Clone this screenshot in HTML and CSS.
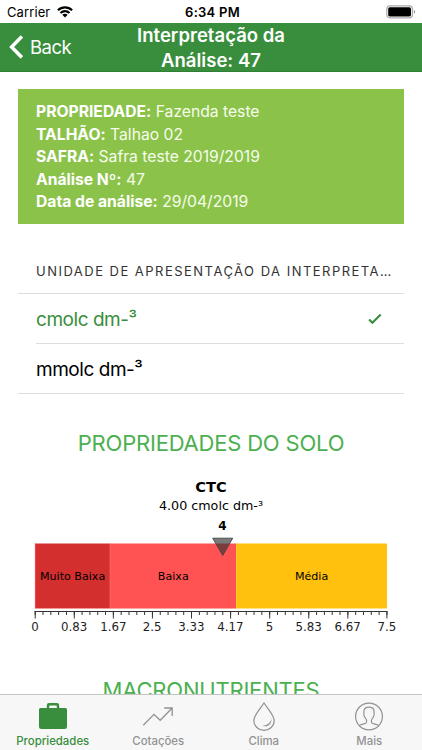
FILE: index.html
```
<!DOCTYPE html>
<html lang="pt-BR">
<head>
<meta charset="utf-8">
<meta name="viewport" content="width=device-width">
<title>Interpretação da Análise</title>
<link rel="stylesheet" href="styles.css">
</head>
<body>
<div class="app">
  <div class="status">
    <div class="carrier"><span>Carrier</span>
      <svg width="16" height="12" viewBox="0 0 16 12"><g fill="none" stroke="#000" stroke-width="2.1"><path d="M.9 4.3C4.9.4 11.1.4 15.1 4.3"/><path d="M3.5 6.9c2.5-2.4 6.5-2.4 9 0"/></g><path d="M5.3 8.8c1.6-1.4 3.8-1.4 5.4 0L8 11.5z"/></svg>
    </div>
    <div class="time">6:34 PM</div>
    <svg class="battery" width="30" height="14" viewBox="0 0 30 14"><rect x=".8" y=".8" width="25.6" height="12" rx="3" fill="#fff" stroke="#aaa" stroke-width="1.2"/><rect x="2.2" y="2.2" width="22.8" height="9.2" rx="1.6"/><path d="M27.8 4.8c1.8.6 1.8 3.4 0 4z" fill="#999"/></svg>
  </div>
  <header class="header">
    <div class="back"><svg width="14" height="24" viewBox="0 0 14 24"><path d="M12.9 1.4 2.6 11.9l10.3 10.5" fill="none" stroke="#fff" stroke-width="3.5"/></svg><span>Back</span></div>
    <h1 class="title">Interpretação da<br>Análise: 47</h1>
  </header>
  <main class="content">
    <section class="card">
      <div class="info"><b>PROPRIEDADE:</b> Fazenda teste</div>
      <div class="info"><b>TALHÃO:</b> Talhao 02</div>
      <div class="info"><b>SAFRA:</b> Safra teste 2019/2019</div>
      <div class="info"><b>Análise Nº:</b> 47</div>
      <div class="info"><b>Data de análise:</b> 29/04/2019</div>
    </section>
    <section class="units">
      <div class="units-head"><span>UNIDADE DE APRESENTAÇÃO DA INTERPRETA…</span></div>
      <div class="unit selected"><span>cmolc dm-³</span><svg width="14" height="12" viewBox="0 0 14 12"><path d="M1.1 6.6 4.4 9.7 12.7 1.6" fill="none" stroke="#388e3c" stroke-width="2.1"/></svg></div>
      <div class="unit"><span>mmolc dm-³</span></div>
    </section>
    <h2 class="section-title">PROPRIEDADES DO SOLO</h2>
    <svg class="chart" width="422" height="165" viewBox="0 475 422 165">
      <g text-anchor="middle">
        <text class="name" x="211" y="492.2">CTC</text>
        <text class="value" x="211" y="510.2">4.00 cmolc dm-³</text>
        <text class="pointer" x="222.5" y="529.5">4</text>
      </g>
      <rect x="35" y="543.5" width="75" height="65" fill="#d32f2f"/>
      <rect x="110" y="543.5" width="126.2" height="65" fill="#ff5252"/>
      <rect x="236.2" y="543.5" width="150.8" height="65" fill="#ffc10d"/>
      <path d="M110 543.5v65M35.2 543.5v65" stroke="#ff7770" stroke-width=".6"/>
      <path d="M35 608.5H236" stroke="#ff9c94" stroke-width=".6"/>
      <path d="M212.7 538.2h20L222.7 555.5z" fill="#333" fill-opacity=".65" stroke="#444" stroke-width=".9"/>
      <g class="bands" text-anchor="middle">
        <text x="72.6" y="580">Muito Baixa</text>
        <text x="173.3" y="580">Baixa</text>
        <text x="311.6" y="580">Média</text>
      </g>
      <g stroke="#333" fill="none">
        <path d="M34.5 611.5h353" stroke-width="1.2"/>
        <path d="M34.7 615H387.6" stroke-width="7" stroke-dasharray="1 38.08"/>
        <path d="M34.7 613.3H387.6" stroke-width="3.6" stroke-dasharray="1 6.816"/>
      </g>
      <g class="scale" text-anchor="middle">
        <text x="35" y="630.5">0</text><text x="74.2" y="630.5">0.83</text><text x="113.4" y="630.5">1.67</text><text x="152.2" y="630.5">2.5</text><text x="191.5" y="630.5">3.33</text><text x="230.5" y="630.5">4.17</text><text x="269.5" y="630.5">5</text><text x="308.6" y="630.5">5.83</text><text x="347.6" y="630.5">6.67</text><text x="387" y="630.5">7.5</text>
      </g>
    </svg>
    <h2 class="section-title next">MACRONUTRIENTES</h2>
  </main>
  <nav class="tabs">
    <div class="tab active"><svg width="30" height="30" viewBox="0 0 30 30"><path fill="#388e3c" d="M1 7.500q0-1.500 1.500-1.500H8.800V3.200Q8.800 1 11 1h8q2.200 0 2.200 2.200V6h6.300Q29 6 29 7.500V24.500Q29 27 26.500 27h-23Q1 27 1 24.500zM11.200 6h7.600V4.200q0-.8-.8-.8h-6q-.8 0-.8.8z"/></svg><span>Propriedades</span></div>
    <div class="tab"><svg width="32" height="30" viewBox="0 0 32 30"><path d="M1.300 23.200 12 12.300l6.200 6L29.700 6.500M22.200 6h8v8" fill="none" stroke="#929292" stroke-width="1.300"/></svg><span>Cotações</span></div>
    <div class="tab"><svg width="30" height="30" viewBox="0 0 30 30"><path d="M15 1C12.200 5.600 4.800 13.200 4.800 18.600a10.200 9.700 0 0 0 20.400 0C25.200 13.200 17.800 5.600 15 1z" fill="none" stroke="#929292" stroke-width="1.200"/><path d="M22.500 16.500c-.7 4.300-3.800 6.700-9 7.300 5.200 2 9.600-2 9-7.300z" fill="#929292"/></svg><span>Clima</span></div>
    <div class="tab"><svg width="30" height="30" viewBox="0 0 30 30"><g fill="none" stroke="#929292" stroke-width="1.200"><circle cx="15" cy="14.500" r="13.400"/><path d="M5.200 23.500c2-1.600 5.900-1.300 7-2.700.8-1.100.4-3.700-.6-4.400-1-.8-1.900-3.300-1.700-6.700.1-3.100 2.200-4.500 5.100-4.500s5 1.400 5.100 4.500c.2 3.400-.7 5.900-1.700 6.700-1 .7-1.400 3.300-.6 4.400 1.100 1.400 5 1.100 7 2.700"/></g></svg><span>Mais</span></div>
  </nav>
</div>
</body>
</html>
```
FILE: styles.css
```
* { box-sizing: border-box; }
body { margin: 0; background: #fff; font-family: Inter, "Liberation Sans", sans-serif; }
svg { display: block; flex: none; }
.app { display: flex; flex-direction: column; width: 422px; height: 750px; overflow: hidden; }
.status { flex: none; height: 23px; display: grid; grid-template-columns: 1fr auto 1fr; align-items: center; padding: 1px 6px 0 7px; font-size: 13px; line-height: 22px; }
.carrier { display: flex; align-items: center; gap: 7px; letter-spacing: .1px; }
.time { font-weight: 600; letter-spacing: .25px; padding-left: 2px; }
.battery { justify-self: end; }
.header { flex: none; height: 49px; background: #388e3c; border-bottom: 1px solid #2f8035; color: #fff; display: grid; grid-template-columns: 1fr auto 1fr; align-items: center; padding: 0 9px; }
.back { display: flex; align-items: center; gap: 7px; font-size: 18.500px; letter-spacing: -.5px; padding-bottom: 2px; }
.title { margin: 0; font-size: 18.500px; line-height: 25px; font-weight: 600; text-align: center; letter-spacing: .02px; }
.content { flex: 1; min-height: 0; overflow: hidden; padding-top: 17px; }
.card { margin: 0 18px; height: 135px; padding: 12px 18px; background: #8bc34a; color: #fff; }
.info { font-size: 15.700px; line-height: 22.500px; letter-spacing: -.01px; color: #f7fcea; }
.info b { font-weight: 700; color: #fff; }
.units { margin: 25px 18px 0; }
.units-head { height: 45px; padding: 11px 8px 0 18px; border-bottom: 1px solid #dedede; font-size: 13px; line-height: 22px; letter-spacing: 1.480px; color: #333; }
.units-head span { display: block; white-space: nowrap; }
.unit { height: 50px; margin-left: 18px; padding-right: 22px; border-bottom: 1px solid #dedede; display: flex; align-items: center; justify-content: space-between; font-size: 19px; letter-spacing: -.46px; }
.unit span { padding-top: 1px; }
.unit:last-child { margin-left: 0; padding-left: 18px; }
.selected { color: #388e3c; }
.section-title { margin: 34px 0 0; font-size: 22px; line-height: 30px; font-weight: 400; letter-spacing: -.2px; text-align: center; color: #4caf50; }
.chart { margin-top: 17px; font-family: "DejaVu Sans", Verdana, sans-serif; }
.name { font-size: 14.600px; font-weight: 700; }
.value { font-size: 12.700px; }
.pointer { font-size: 12px; font-weight: 700; }
.bands { font-size: 11.100px; }
.scale { font-size: 11.800px; fill: #222; }
.next { margin-top: 35px; }
.tabs { flex: none; height: 56px; border-top: 1px solid #c4c4c4; background: #f7f7f7; display: grid; grid-template-columns: repeat(4, 1fr); }
.tab { display: flex; flex-direction: column; align-items: center; padding-top: 7px; font-size: 11.400px; line-height: 14px; font-weight: 500; color: #929292; gap: 2px; }
.active { color: #388e3c; }
```
